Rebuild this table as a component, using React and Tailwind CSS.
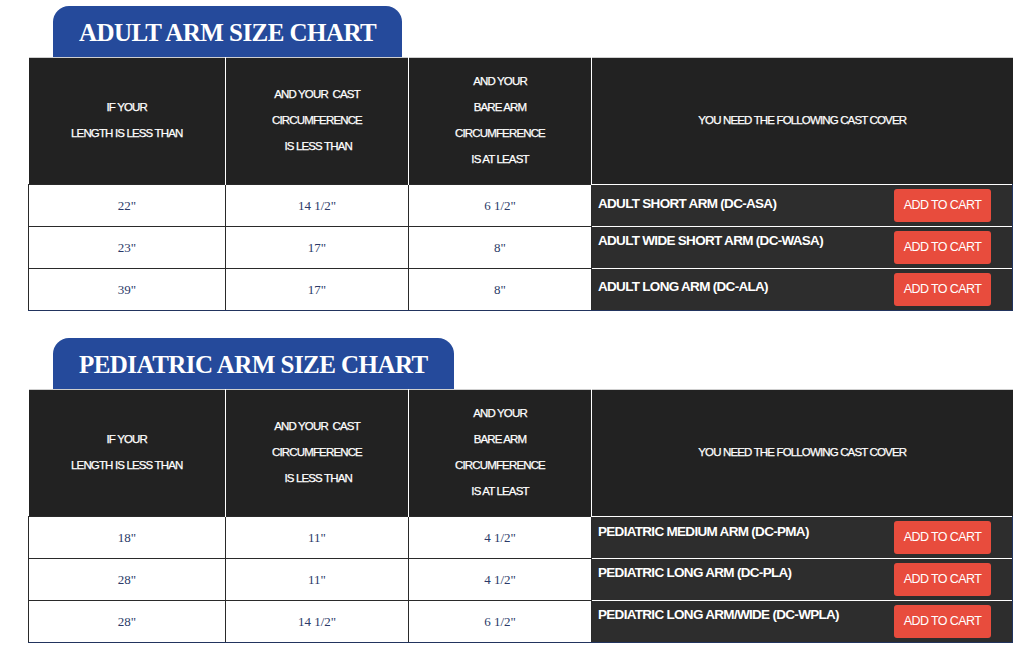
import React from "react";

const SANS = "font-['Liberation_Sans',Arial,sans-serif]";
const SERIF = "font-['Liberation_Serif','Times_New_Roman',serif]";

const CHARTS = [
  {
    title: "ADULT ARM SIZE CHART",
    rows: [
      ["22\"", "14 1/2\"", "6 1/2\"", "ADULT SHORT ARM (DC-ASA)", "pt-[12px]"],
      ["23\"", "17\"", "8\"", "ADULT WIDE SHORT ARM (DC-WASA)", "pt-[7px]"],
      ["39\"", "17\"", "8\"", "ADULT LONG ARM (DC-ALA)", "pt-[11px]"],
    ],
  },
  {
    title: "PEDIATRIC ARM SIZE CHART",
    rows: [
      ["18\"", "11\"", "4 1/2\"", "PEDIATRIC MEDIUM ARM (DC-PMA)", "pt-[8px]"],
      ["28\"", "11\"", "4 1/2\"", "PEDIATRIC LONG ARM (DC-PLA)", "pt-[7px]"],
      ["28\"", "14 1/2\"", "6 1/2\"", "PEDIATRIC LONG ARM/WIDE (DC-WPLA)", "pt-[7px]"],
    ],
  },
];

function HeadCell({ lines, last }) {
  return (
    <th
      className={`bg-[#222222] border-t border-[#cfcfcf] align-middle p-0 font-normal ${last ? "" : "border-r border-r-white"}`}
    >
      <div className={`${SANS} text-[11.5px] tracking-[-0.85px] leading-[26px] text-white text-center -mt-[2px] [-webkit-text-stroke:0.25px_white]`}>
        {lines.map((l, i) => (
          <div key={i} className="whitespace-pre">{l}</div>
        ))}
      </div>
    </th>
  );
}

function Chart({ title, rows, first }) {
  return (
    <section className={first ? "" : "mt-[27px]"}>
      <div className="ml-[25px] inline-flex h-[51px] items-center rounded-t-[16px] bg-[#254a9b] px-[26px]">
        <h2 className={`${SERIF} font-bold text-[25px] tracking-[-0.55px] text-white leading-none pt-[2px]`}>
          {title}
        </h2>
      </div>
      <table className="w-[984px] table-fixed border-collapse">
        <colgroup>
          <col className="w-[197px]" />
          <col className="w-[183px]" />
          <col className="w-[183px]" />
          <col className="w-[421px]" />
        </colgroup>
        <thead>
          <tr className="h-[127px]">
            <HeadCell lines={["IF YOUR", "LENGTH IS LESS THAN"]} />
            <HeadCell lines={["AND YOUR  CAST", "CIRCUMFERENCE", " IS LESS THAN"]} />
            <HeadCell lines={["AND YOUR", "BARE ARM", "CIRCUMFERENCE", "IS AT LEAST"]} />
            <HeadCell lines={["YOU NEED THE FOLLOWING CAST COVER"]} last />
          </tr>
        </thead>
        <tbody>
          {rows.map((r, i) => (
            <tr key={i} className="h-[42px]">
              {r.slice(0, 3).map((v, j) => (
                <td
                  key={j}
                  className={`${SERIF} border border-[#2a2a2a] ${i === rows.length - 1 ? "border-b-[#22345e]" : ""} p-0 text-center align-middle text-[13px] text-[#2b3a68] bg-white`}
                >
                  {v}
                </td>
              ))}
              <td
                className={`bg-[#2d2d2d] border-t border-t-white border-r border-r-[#22345e] ${i === rows.length - 1 ? "border-b border-b-[#22345e]" : ""} p-0 align-top`}
              >
                <div className="flex h-[41px] items-start justify-between pl-[6px] pr-[21px]">
                  <span className={`${SANS} ${r[4]} font-bold text-[13.5px] leading-none tracking-[-0.7px] text-white`}>
                    {r[3]}
                  </span>
                  <button className={`${SANS} mt-[4px] h-[33px] w-[97px] rounded-[3px] bg-[#e84c3d] text-[12.5px] tracking-[-0.6px] text-white`}>
                    ADD TO CART
                  </button>
                </div>
              </td>
            </tr>
          ))}
        </tbody>
      </table>
    </section>
  );
}

export default function App() {
  return (
    <div className="min-h-[671px] w-[1029px] bg-white pl-[28px] pt-[6px]">
      {CHARTS.map((c, i) => (
        <Chart key={c.title} {...c} first={i === 0} />
      ))}
    </div>
  );
}
